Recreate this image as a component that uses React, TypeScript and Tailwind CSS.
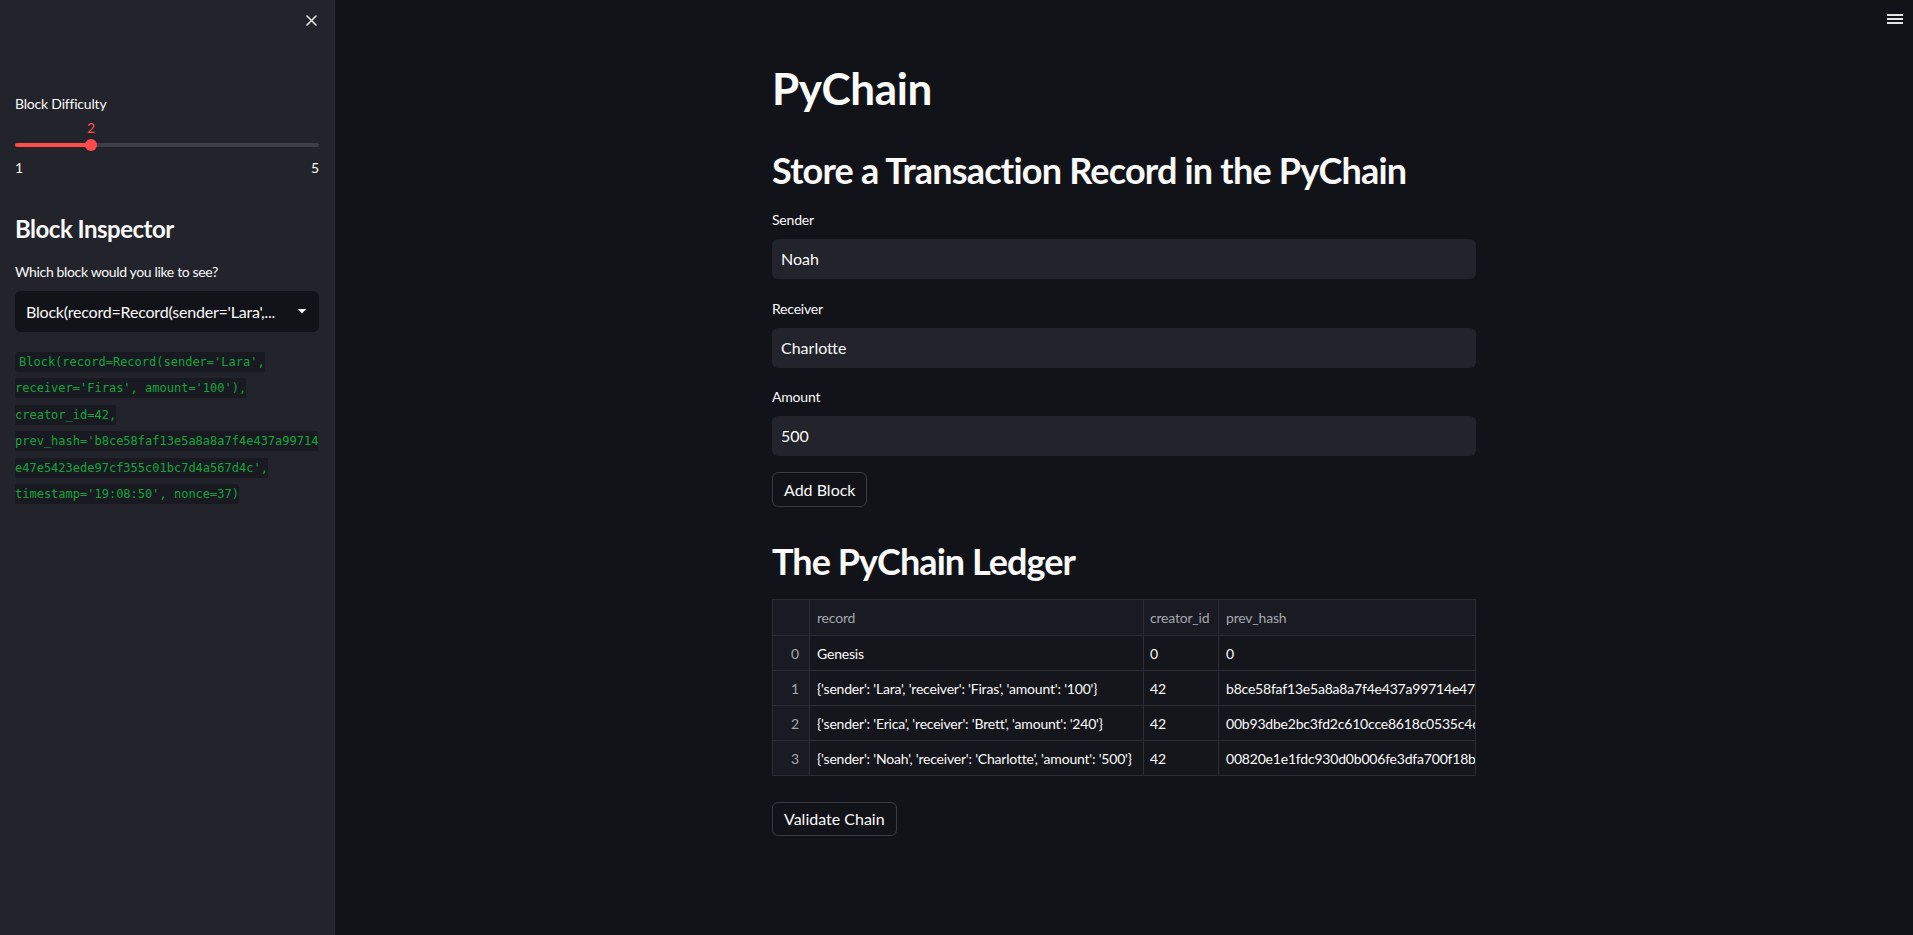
import React from "react";

const sans = { fontFamily: "Lato, 'Noto Sans', sans-serif" } as const;

const rows = [
  { i: 0, record: "Genesis", creator: "0", hash: "0" },
  {
    i: 1,
    record: "{'sender': 'Lara', 'receiver': 'Firas', 'amount': '100'}",
    creator: "42",
    hash: "b8ce58faf13e5a8a8a7f4e437a99714e47e5423ede97cf355c01bc7d4a567d4c",
  },
  {
    i: 2,
    record: "{'sender': 'Erica', 'receiver': 'Brett', 'amount': '240'}",
    creator: "42",
    hash: "00b93dbe2bc3fd2c610cce8618c0535c4cb7a1e9d2f0c83b5e6a7d4f90c1b2e3",
  },
  {
    i: 3,
    record: "{'sender': 'Noah', 'receiver': 'Charlotte', 'amount': '500'}",
    creator: "42",
    hash: "00820e1e1fdc930d0b006fe3dfa700f18b6497c2d1e5a0b3f8c6d94e2a71f05b",
  },
];

function Field({ label, value }: { label: string; value: string }) {
  return (
    <div className="flex flex-col">
      <div className="h-[20px] text-[14px] leading-[20px] tracking-[-0.2px] text-[#fafafa]">{label}</div>
      <div className="mt-[9px] flex h-[40px] items-center rounded-[6px] bg-[#22232b] px-[9px] text-[16px] text-[#fafafa]">
        {value}
      </div>
    </div>
  );
}

export default function App() {
  return (
    <div className="flex min-h-[935px] w-full bg-[#121319] text-[#fafafa]" style={sans}>
      {/* Sidebar */}
      <aside className="flex min-h-[935px] w-[335px] shrink-0 flex-col border-r border-[#2a2b33] bg-[#23242b] px-[15px]">
        <div className="flex justify-end pr-[2px] pt-[15px]">
          <svg width="11" height="11" viewBox="0 0 11 11" fill="none">
            <path d="M1 1L10 10M10 1L1 10" stroke="#e6e6e6" strokeWidth="1.6" strokeLinecap="round" />
          </svg>
        </div>

        <div className="mt-[68px] h-[20px] text-[14px] leading-[20px] tracking-[-0.2px]">Block Difficulty</div>

        {/* slider */}
        <div className="relative mt-[4px] h-[60px] w-[304px]">
          <div className="absolute left-[76px] top-0 -translate-x-1/2 text-[14px] leading-[20px] text-[#ff4b4b]">2</div>
          <div className="absolute left-0 top-[25px] h-[4px] w-[304px] rounded-full bg-[#3d3e47]" />
          <div className="absolute left-0 top-[25px] h-[4px] w-[76px] rounded-full bg-[#ff4b4b]" />
          <div className="absolute left-[70px] top-[21px] h-[12px] w-[12px] rounded-full bg-[#ff4b4b]" />
          <div className="absolute left-0 top-[40px] text-[14px] leading-[20px]">1</div>
          <div className="absolute right-0 top-[40px] text-[14px] leading-[20px]">5</div>
        </div>

        <div className="mt-[35.5px] text-[24px] font-bold leading-[29px] tracking-[-0.5px]">Block Inspector</div>

        <div className="mt-[19px] text-[14px] leading-[20px] tracking-[-0.35px]">Which block would you like to see?</div>

        <div className="mt-[9.5px] flex h-[41px] w-[304px] items-center justify-between rounded-[6px] bg-[#121319] pl-[11px] pr-[13px]">
          <span className="text-[16px] tracking-[-0.2px] text-[#fafafa]">Block(record=Record(sender='Lara',...</span>
          <svg width="8" height="5" viewBox="0 0 8 5">
            <path d="M0 0H8L4 4.5Z" fill="#fafafa" />
          </svg>
        </div>

        <p className="mt-[16.5px] w-[304px] text-[12px] leading-[25.5px] [overflow-wrap:anywhere]">
          <code
            className="rounded-[4px] bg-[#191a21] py-[3px] pl-[4px] text-[#13a53b]"
            style={{ fontFamily: "'DejaVu Sans Mono', 'Liberation Mono', monospace", boxDecorationBreak: "slice" }}
          >
            Block(record=Record(sender='Lara', receiver='Firas', amount='100'), creator_id=42,
            prev_hash='b8ce58faf13e5a8a8a7f4e437a99714e47e5423ede97cf355c01bc7d4a567d4c', timestamp='19:08:50', nonce=37)
          </code>
        </p>
      </aside>

      {/* Main */}
      <main className="relative flex flex-1 justify-center">
        <div className="absolute right-[10px] top-[14px] flex flex-col gap-[2.5px]">
          <div className="h-[1.5px] w-[16px] bg-[#e6e6e6]" />
          <div className="h-[1.5px] w-[16px] bg-[#e6e6e6]" />
          <div className="h-[1.5px] w-[16px] bg-[#e6e6e6]" />
        </div>

        <div className="flex w-[704px] flex-col pb-[60px] pt-[62px]">
          <h1 className="text-[44px] font-bold leading-[53px] tracking-[-0.4px]">PyChain</h1>
          <h2 className="mt-[34px] text-[36px] font-bold leading-[43px] tracking-[-0.8px]">
            Store a Transaction Record in the PyChain
          </h2>

          <div className="mt-[18px] flex flex-col gap-[19.5px]">
            <Field label="Sender" value="Noah" />
            <Field label="Receiver" value="Charlotte" />
            <Field label="Amount" value="500" />
          </div>

          <div className="mt-[16px]">
            <button className="h-[35px] rounded-[6px] border border-[#3b3c45] bg-[#121319] px-[11px] text-[16px] text-[#fafafa]">
              Add Block
            </button>
          </div>

          <h2 className="mt-[33px] text-[36px] font-bold leading-[43px] tracking-[-0.95px]">The PyChain Ledger</h2>

          <div className="mt-[16px] w-[704px] overflow-hidden border-l border-r border-t border-[#2b2c34] bg-[#15161c] text-[14px] tracking-[-0.2px]">
            <div className="flex h-[36px] border-b border-[#2b2c34] bg-[#1a1b22] text-[#a3a6ae]">
              <div className="w-[37px] shrink-0 border-r border-[#2b2c34]" />
              <div className="flex w-[334px] shrink-0 items-center border-r border-[#2b2c34] px-[7px]">record</div>
              <div className="flex w-[75px] shrink-0 items-center border-r border-[#2b2c34] px-[6px]">creator_id</div>
              <div className="flex w-[600px] shrink-0 items-center px-[7px]">prev_hash</div>
            </div>
            {rows.map((r) => (
              <div key={r.i} className="flex h-[35px] border-b border-[#2b2c34]">
                <div className="flex w-[37px] shrink-0 items-center justify-end border-r border-[#2b2c34] bg-[#1a1b22] pr-[10px] text-[#a3a6ae]">
                  {r.i}
                </div>
                <div className="flex w-[334px] shrink-0 items-center overflow-hidden whitespace-nowrap border-r border-[#2b2c34] px-[7px]">
                  {r.record}
                </div>
                <div className="flex w-[75px] shrink-0 items-center border-r border-[#2b2c34] px-[6px]">{r.creator}</div>
                <div className="flex w-[600px] shrink-0 items-center whitespace-nowrap px-[7px]">{r.hash}</div>
              </div>
            ))}
          </div>

          <div className="mt-[26px]">
            <button className="h-[34px] rounded-[6px] border border-[#3b3c45] bg-[#121319] px-[11px] text-[16px] text-[#fafafa]">
              Validate Chain
            </button>
          </div>
        </div>
      </main>
    </div>
  );
}
